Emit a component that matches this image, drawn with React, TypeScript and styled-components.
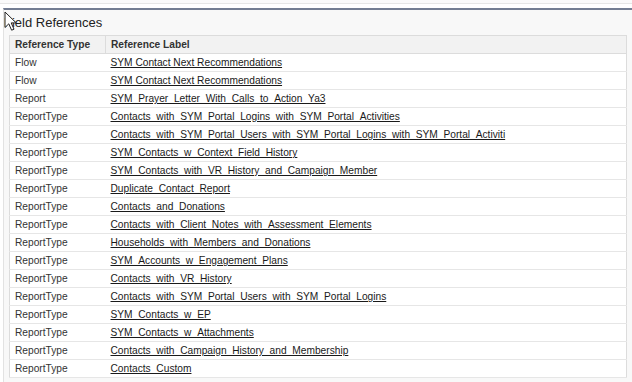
import React from "react";
import { createGlobalStyle, styled } from "styled-components";

const GlobalStyle = createGlobalStyle`
  html, body {
    margin: 0;
    padding: 0;
    background: #ffffff;
  }
  body {
    font-family: "Liberation Sans", Arial, sans-serif;
    color: #222;
  }
`;

const Page = styled.div`
  position: relative;
  width: 632px;
  height: 382px;
  overflow: hidden;
  box-sizing: border-box;
  border-top: 3px solid #fafafa;
`;

const TopRule = styled.div`
  height: 1px;
  background: #e6e6e6;
  margin-bottom: 4px;
`;

const Panel = styled.section`
  margin-left: 3px;
  background: #f8f8f8;
  border-top: 2px solid #737d92;
  border-left: 1px solid #e2e2e2;
  padding: 0 5px 4px 5px;
  box-sizing: border-box;
  height: 375px;
`;

const Title = styled.h2`
  margin: 0 0 0 -5px;
  padding: 3px 0 0 0;
  height: 22px;
  line-height: 19px;
  font-size: 13px;
  font-weight: normal;
  color: #222;
`;

const Table = styled.table`
  width: 618px;
  border-collapse: collapse;
  background: #fff;
  border: 1px solid #dcdcdc;
  font-size: 10.2px;
  table-layout: fixed;
`;

const HeadCell = styled.th<{ $w?: number }>`
  width: ${({ $w }) => ($w ? `${$w}px` : "auto")};
  height: 17px;
  padding: 0 5px;
  text-align: left;
  font-weight: bold;
  color: #333;
  background: #f2f2f2;
  border-bottom: 1px solid #dcdcdc;
  border-right: 1px solid #dcdcdc;
  white-space: nowrap;
`;

const Row = styled.tr`
  height: 18px;
  border-bottom: 1px solid #e6e6e6;
`;

const Cell = styled.td`
  padding: 0 5px;
  color: #333;
  white-space: nowrap;
  overflow: hidden;
`;

const Link = styled.a`
  color: #1a1a1a;
  text-decoration: underline;
  cursor: pointer;
`;

const Cursor = styled.svg`
  position: absolute;
  left: 4px;
  top: 8px;
`;

const refs: [string, string][] = [
  ["Flow", "SYM Contact Next Recommendations"],
  ["Flow", "SYM Contact Next Recommendations"],
  ["Report", "SYM_Prayer_Letter_With_Calls_to_Action_Ya3"],
  ["ReportType", "Contacts_with_SYM_Portal_Logins_with_SYM_Portal_Activities"],
  ["ReportType", "Contacts_with_SYM_Portal_Users_with_SYM_Portal_Logins_with_SYM_Portal_Activiti"],
  ["ReportType", "SYM_Contacts_w_Context_Field_History"],
  ["ReportType", "SYM_Contacts_with_VR_History_and_Campaign_Member"],
  ["ReportType", "Duplicate_Contact_Report"],
  ["ReportType", "Contacts_and_Donations"],
  ["ReportType", "Contacts_with_Client_Notes_with_Assessment_Elements"],
  ["ReportType", "Households_with_Members_and_Donations"],
  ["ReportType", "SYM_Accounts_w_Engagement_Plans"],
  ["ReportType", "Contacts_with_VR_History"],
  ["ReportType", "Contacts_with_SYM_Portal_Users_with_SYM_Portal_Logins"],
  ["ReportType", "SYM_Contacts_w_EP"],
  ["ReportType", "SYM_Contacts_w_Attachments"],
  ["ReportType", "Contacts_with_Campaign_History_and_Membership"],
  ["ReportType", "Contacts_Custom"],
];

export default function App() {
  return (
    <Page>
      <GlobalStyle />
      <TopRule />
      <Panel>
        <Title>Field References</Title>
        <Table>
          <thead>
            <tr>
              <HeadCell $w={85}>Reference Type</HeadCell>
              <HeadCell>Reference Label</HeadCell>
            </tr>
          </thead>
          <tbody>
            {refs.map(([type, label], i) => (
              <Row key={i}>
                <Cell>{type}</Cell>
                <Cell>
                  <Link>{label}</Link>
                </Cell>
              </Row>
            ))}
          </tbody>
        </Table>
      </Panel>
      <Cursor width="14" height="21" viewBox="0 0 14 21">
        <path
          d="M1 1 L1 16.5 L4.8 12.8 L7.6 19.2 L10 18.2 L7.2 11.9 L12.2 11.9 Z"
          fill="#fff"
          stroke="#222"
          strokeWidth="1"
          strokeLinejoin="round"
        />
      </Cursor>
    </Page>
  );
}
